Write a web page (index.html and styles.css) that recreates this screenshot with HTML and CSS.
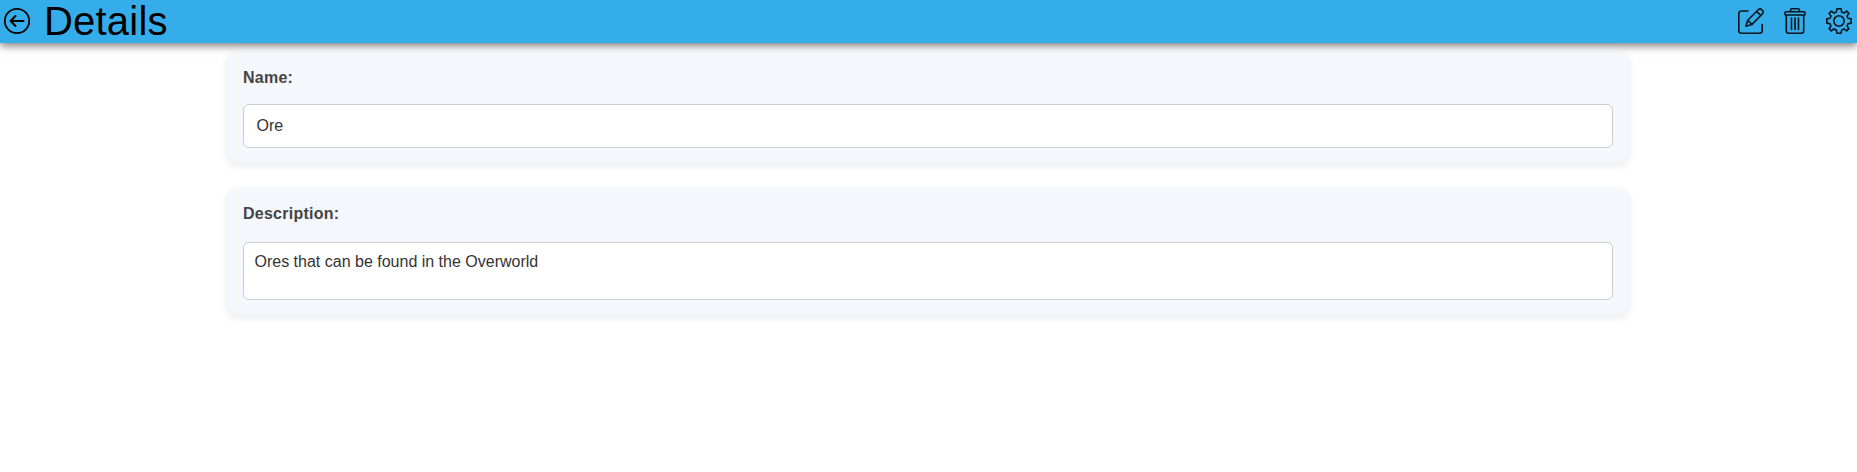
FILE: index.html
```html
<!DOCTYPE html>
<html lang="en">
<head>
<meta charset="utf-8">
<title>Details</title>
<link rel="stylesheet" href="styles.css">
</head>
<body>
<header class="topbar">
  <svg class="icon icon-back" viewBox="0 0 26 26"><circle cx="13" cy="13" r="12.2"/><path class="arrow" d="M19.5 13H7M11.5 8L6.6 13l4.900 5"/></svg>
  <h1 class="title">Details</h1>
  <nav class="actions">
    <svg class="icon" viewBox="0 0 26 26"><path d="M10 3H3.500Q.8 3 .8 5.700V22.500Q.8 25.200 3.500 25.200H21.500Q24.200 25.200 24.200 22.500V16.500M8 18.300L9.700 12.200 20.300 1.700Q22 .2 23.700 1.700L24.600 2.600Q26 4.200 24.600 5.800L14 16.400ZM9.700 12.200L14 16.400M18.600 3.400L22.900 7.600"/></svg>
    <svg class="icon" viewBox="0 0 26 26"><path d="M8.500 3.600V2.200Q8.500.8 10 .8H16Q17.500.8 17.500 2.200V3.600M3.800 3.700H22.200Q23 3.700 23 4.500V6.200Q23 7 22.200 7H3.800Q3 7 3 6.200V4.500Q3 3.700 3.800 3.700ZM4.300 7V22.800Q4.300 25.200 6.700 25.200H19.300Q21.700 25.200 21.700 22.800V7M9.500 10V21.500M13 10V21.500M16.500 10V21.500"/></svg>
    <svg class="icon" viewBox="0 0 26 26"><circle cx="13" cy="13" r="5.200"/><path d="M10.900.8H15.100L15.700 4.100 18 5.100 20.700 3.200 22.900 5.300 21 8 22 10.300 25.200 10.900V15.100L22 15.700 21 18 22.900 20.700 20.700 22.800 18 20.900 15.700 21.900 15.100 25.200H10.900L10.300 21.900 8 20.900 5.300 22.800 3.100 20.700 5 18 4 15.700.8 15.100V10.900L4 10.300 5 8 3.100 5.300 5.300 3.200 8 5.100 10.300 4.100Z"/></svg>
  </nav>
</header>
<main class="content">
  <section class="card">
    <label class="label" for="name">Name:</label>
    <div class="field field-name" id="name">Ore</div>
  </section>
  <section class="card">
    <label class="label" for="description">Description:</label>
    <div class="field field-description" id="description">Ores that can be found in the Overworld</div>
  </section>
</main>
</body>
</html>
```
FILE: styles.css
```css
* {
  box-sizing: border-box;
}

body {
  min-height: 100vh;
  margin: 0;
  background: #fff;
  font-family: "Liberation Sans", Arial, sans-serif;
}

.topbar {
  display: flex;
  align-items: center;
  height: 43px;
  padding: 0 5px 0 4px;
  background: #36adeb;
  box-shadow: 0 3px 8px rgba(0, 0, 0, 0.5);
}

.icon {
  width: 26px;
  height: 26px;
  margin-bottom: 1px;
  overflow: visible;
  fill: none;
  stroke: #06141c;
  stroke-width: 1.6;
  stroke-linejoin: round;
  stroke-linecap: round;
}

.icon-back {
  stroke: #000;
  stroke-width: 1.7;
}

.arrow {
  stroke-width: 2;
}

.title {
  margin: 0 0 0 14px;
  font-size: 40px;
  font-weight: 400;
  line-height: 43px;
  letter-spacing: 0.2px;
  color: #000;
}

.actions {
  display: flex;
  gap: 18px;
  margin-left: auto;
}

.content {
  display: flex;
  flex-direction: column;
  gap: 26px;
  width: 1401px;
  margin: 10px auto 0;
  padding-right: 1px;
}

.card {
  padding: 15px;
  border-radius: 8px;
  background: #f4f7fc;
  box-shadow: 0 2px 8px rgba(0, 0, 0, 0.1);
}

.label {
  display: block;
  height: 36px;
  font-size: 16px;
  font-weight: 700;
  line-height: 19px;
  letter-spacing: 0.25px;
  color: #444;
}

.field {
  border: 1px solid #ccc;
  border-radius: 6px;
  background: #fff;
  font-size: 16px;
  color: #333;
}

.field-name {
  height: 44px;
  padding: 0 12.500px;
  line-height: 42px;
}

.field-description {
  height: 58px;
  margin-top: 2px;
  padding: 9px 10.500px;
  line-height: 20px;
}
```
